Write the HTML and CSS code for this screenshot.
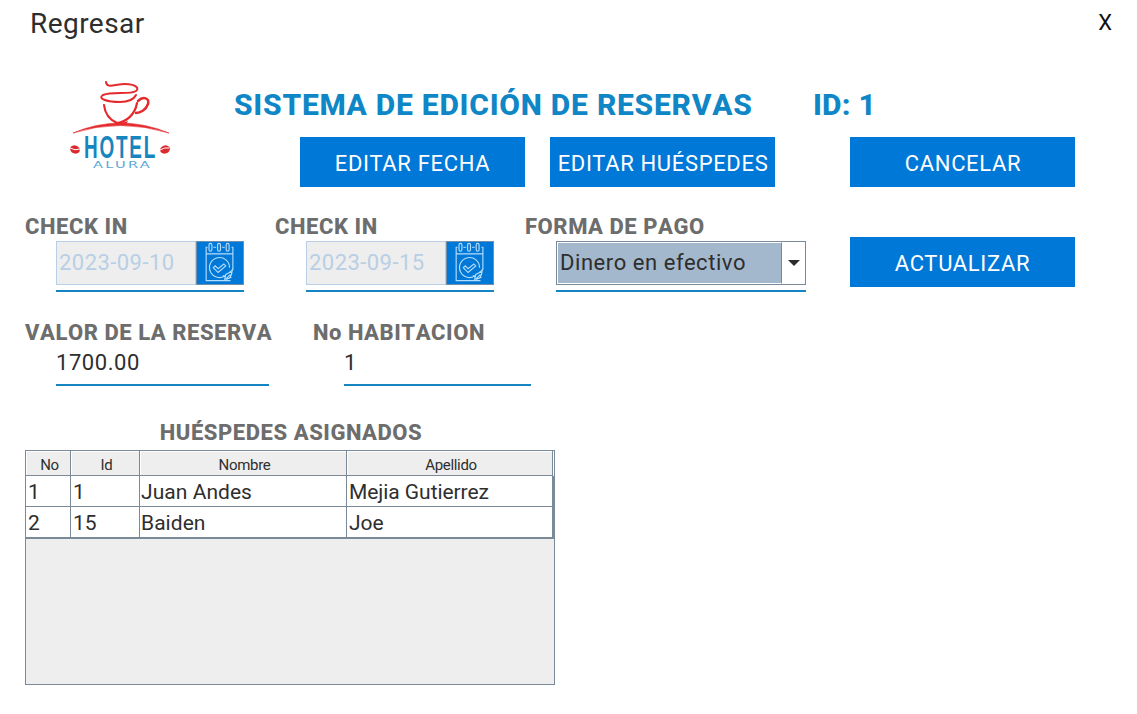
FILE: index.html
```html
<!DOCTYPE html>
<html lang="es">
<head>
<meta charset="utf-8">
<title>Hotel Alura</title>
<link rel="stylesheet" href="styles.css">
</head>
<body>
<svg width="0" height="0" class="defs">
  <symbol id="calendar" viewBox="0 0 48 44">
    <g fill="none" stroke="#b4dcfb" stroke-width="1.200">
      <path d="M11 5.500H9.5V40.500H35M37.500 29V5.500H36M17 5.500h3M26 5.500h3M9.500 12.500h28"/>
      <rect x="12.500" y="1.500" width="3" height="8" rx="1.500"/>
      <rect x="21.500" y="1.500" width="3" height="8" rx="1.500"/>
      <rect x="30.500" y="1.500" width="3" height="8" rx="1.500"/>
      <path d="M30 35a10.500 10.500 0 1 1 4-8"/>
      <path d="M17 27l2-2 3 3 6-5 2 2-8 7z"/>
      <path d="M29 39l1-5 4-2 3-3-1 5-2 4zM30 39l5-5M27 35l3 2M31 39l5-2M34 31l3 1"/>
    </g>
  </symbol>
</svg>
<main class="window">
  <header class="topbar"><span class="back">Regresar</span><span class="close">X</span></header>

  <section class="banner">
    <svg class="logo" width="120" height="110" viewBox="0 0 120 110">
      <g fill="none" stroke="#e52a2e" stroke-linecap="round">
        <path d="M46 12C47 19 55 14 65 14C75 14 80 18 76 21C70 25 52 21 43 25C37 29 48 32 60 32C69 32 74 29 76 25" stroke-width="2"/>
        <path d="M44 35C45 44 50 50 57 53C66 52 75 45 77 33" stroke-width="2.200"/>
        <path d="M78 31C83 26 90 28 88 34C86 40 80 43 76 43" stroke-width="2.500"/>
      </g>
      <path d="M13 63Q60 43 109 63Q60 48 13 63Z" fill="#e52a2e" stroke="#e52a2e" stroke-width=".6"/>
      <path d="M54 51q6 3 14 0l-2 4H56z" fill="#e52a2e"/>
      <g fill="#db292d">
        <ellipse cx="15" cy="79.500" rx="5" ry="4" transform="rotate(20 15 79.500)"/>
        <ellipse cx="105" cy="79.500" rx="5" ry="4" transform="rotate(-20 105 79.500)"/>
      </g>
      <path d="M10 78q5 3 10 1M100 80q5-3 9-2" fill="none" stroke="#fff" stroke-width="1"/>
      <text class="logo-name" x="24" y="87.500" textLength="73" lengthAdjust="spacingAndGlyphs">HOTEL</text>
      <text class="logo-sub" x="33" y="97.500" textLength="59" lengthAdjust="spacingAndGlyphs">ALURA</text>
    </svg>
    <div class="banner-body">
      <div class="headline"><h1 class="title">SISTEMA DE EDICIÓN DE RESERVAS</h1><span class="title record">ID: 1</span></div>
      <div class="actions">
        <button class="btn b-fecha">EDITAR FECHA</button>
        <button class="btn b-hues">EDITAR HUÉSPEDES</button>
        <button class="btn b-cancel">CANCELAR</button>
      </div>
    </div>
  </section>

  <section class="fields">
    <div class="field">
      <label class="label l-check">CHECK IN</label>
      <div class="control date"><span class="date-text">2023-09-10</span><svg class="date-btn" width="48" height="44"><use href="#calendar"/></svg></div>
    </div>
    <div class="field">
      <label class="label l-check">CHECK IN</label>
      <div class="control date"><span class="date-text">2023-09-15</span><svg class="date-btn" width="48" height="44"><use href="#calendar"/></svg></div>
    </div>
    <div class="field">
      <label class="label l-pago">FORMA DE PAGO</label>
      <div class="control"><div class="combo"><span class="combo-text">Dinero en efectivo</span><span class="combo-arrow"><svg width="12" height="6"><path d="M0 0h12L6 6z" fill="#2b2b2b"/></svg></span></div></div>
    </div>
    <button class="btn b-act">ACTUALIZAR</button>
  </section>

  <section class="values">
    <div class="value"><label class="label l-valor">VALOR DE LA RESERVA</label><div class="entry amount">1700.00</div></div>
    <div class="value"><label class="label l-hab">No HABITACION</label><div class="entry room">1</div></div>
  </section>

  <section class="guests">
    <h2 class="label l-guests">HUÉSPEDES ASIGNADOS</h2>
    <div class="scroll">
      <div class="grid">
        <span class="th">No</span><span class="th">Id</span><span class="th">Nombre</span><span class="th th-last">Apellido</span>
        <span class="td">1</span><span class="td">1</span><span class="td">Juan Andes</span><span class="td">Mejia Gutierrez</span>
        <span class="td">2</span><span class="td">15</span><span class="td">Baiden</span><span class="td">Joe</span>
      </div>
    </div>
  </section>
</main>
</body>
</html>
```
FILE: styles.css
```css
* { box-sizing: border-box; }
body { margin: 0; background: #fff; color: #2e2e2e; font-family: Roboto, "Liberation Sans", sans-serif; }
.defs { display: block; }
.window { width: 1137px; height: 714px; overflow: hidden; }
.topbar { display: flex; justify-content: space-between; height: 70px; padding: 7px 25px 0 30px; line-height: 33px; }
.back { font-size: 28px; letter-spacing: .45px; }
.close { font-size: 22px; line-height: 31px; color: #111; }

.banner { display: flex; padding-left: 60px; height: 142px; }
.logo { flex: none; display: block; }
.logo-name { font: bold 32px "Liberation Sans", sans-serif; letter-spacing: 3px; fill: #1685c0; }
.logo-sub { font: 9.5px "DejaVu Sans", sans-serif; letter-spacing: 1.5px; fill: #5aa9d6; }
.banner-body { padding-left: 54px; }
.headline { display: flex; height: 67px; padding-top: 17px; }
.title { margin: 0; font-size: 30px; line-height: 36px; font-weight: 850; font-kerning: none; letter-spacing: .75px; color: #0f86c6; width: 579px; white-space: nowrap; }
.record { width: auto; letter-spacing: .2px; }
.actions { display: flex; gap: 25px; padding-left: 66px; }
.btn { width: 225px; height: 50px; padding: 2px 0 0; border: 0; background: #0078d7; color: #fff; font: 22px Roboto, "Liberation Sans", sans-serif; letter-spacing: .66px; white-space: nowrap; }
.b-cancel, .b-hues { padding-left: 1px; }
.b-cancel { margin-left: 50px; }

.fields { display: flex; height: 106px; padding-left: 25px; }
.field { width: 250px; }
.field:nth-child(3) { width: 325px; }
.label { display: block; margin: 0; font-size: 22px; line-height: 29px; font-weight: 850; font-kerning: none; letter-spacing: .56px; color: #6d6d6d; white-space: nowrap; }
.control { width: 188px; height: 51px; margin-left: 31px; border-bottom: 2px solid #1485c2; }
.field:nth-child(3) .control { width: 250px; }
.date { display: flex; }
.date-text { width: 140px; height: 44px; padding-left: 2px; border: 1px solid #b8cfe5; background: #eee; color: #b8cfe5; font-size: 22px; line-height: 42px; letter-spacing: .45px; }
.date-btn { background: #0078d7; border: 1px solid #6f8fac; }
.combo { display: flex; height: 44px; border: 1px solid #7a8a99; }
.combo-text { width: 225px; margin: 0; padding-left: 2px; border: 1px solid #fff; border-right: 1px solid #7a8a99; background: #a3b8cc; font-size: 22px; line-height: 40px; letter-spacing: .56px; white-space: nowrap; }
.combo-arrow { flex: 1; display: flex; align-items: center; justify-content: center; }
.b-act { margin-top: 25px; }

.values { display: flex; height: 100px; padding: 0 25px; }
.value { width: 288px; }
.entry { height: 39px; margin-left: 31px; border-bottom: 2px solid #1485c2; font-size: 22px; line-height: 32px; letter-spacing: .55px; }
.amount { width: 213px; }
.room { width: 187px; }

.guests { width: 555px; padding-left: 25px; }
.l-guests { height: 32px; text-align: center; padding-left: 2px; }
.scroll { height: 235px; background: #eee; border: 1px solid #7a8a99; }
.grid { display: grid; grid-template-columns: 45px 69px 207px 207px; grid-template-rows: 25px 31px 32px; }
.th { padding-left: 3px; border: 1px solid #7a8a99; border-width: 0 1px 1px 0; box-shadow: inset 1px 1px #fff; text-align: center; font-size: 15px; letter-spacing: -.3px; line-height: 28px; }
.th-last { margin-right: 1px; box-shadow: inset 1px 1px #fff, 1px 0 #fff; }
.td { padding-left: 2px; background: #fff; border: 1px solid #7a8a99; border-width: 0 1px 1px 0; font-size: 21px; letter-spacing: -.06px; line-height: 33px; height: 31px; white-space: nowrap; }
.td:nth-child(4n) { border-right-width: 2px; }
.td:nth-child(4n+3) { padding-left: 1px; letter-spacing: .05px; }
.td:nth-child(n+9) { height: 32px; border-bottom-width: 2px; }
```
